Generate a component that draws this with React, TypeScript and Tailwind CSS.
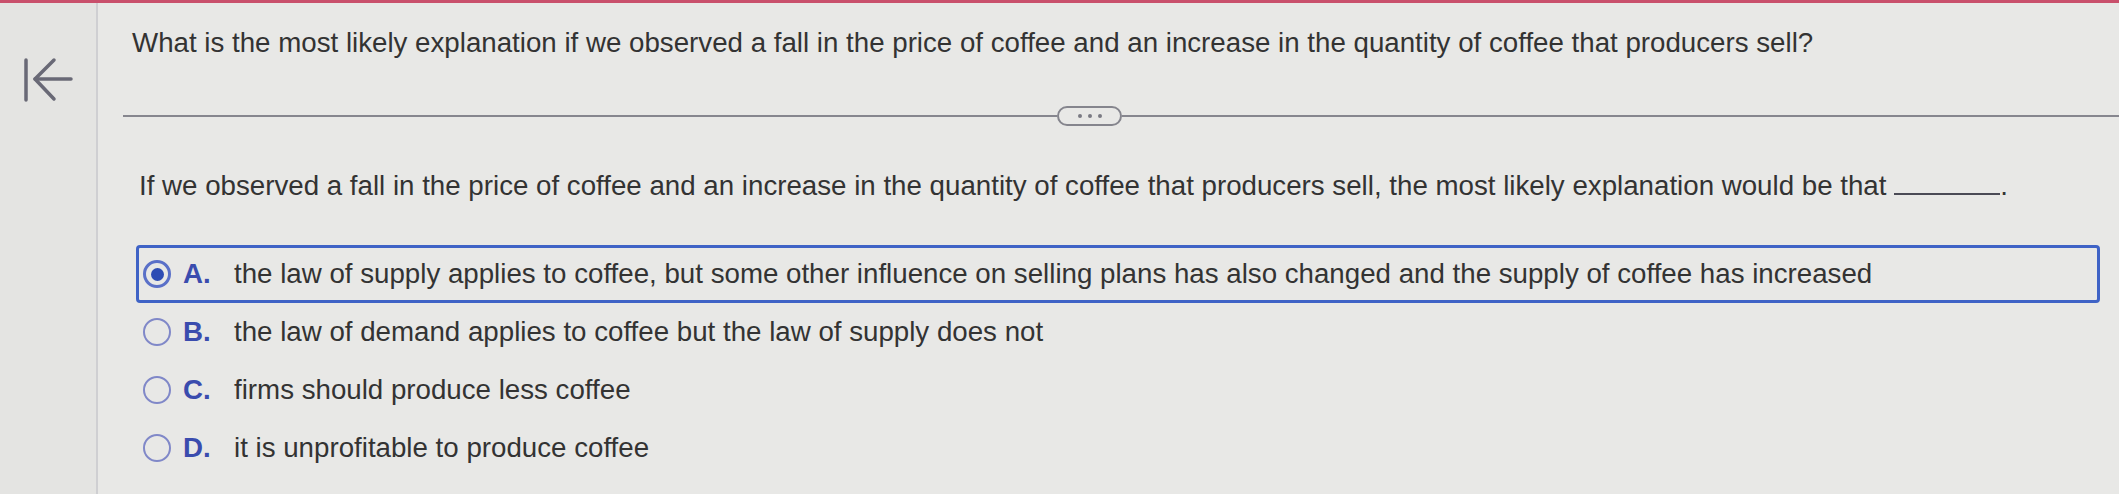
import React from "react";

type Option = { key: string; text: string; selected?: boolean };

const options: Option[] = [
  {
    key: "A.",
    text: "the law of supply applies to coffee, but some other influence on selling plans has also changed and the supply of coffee has increased",
    selected: true,
  },
  { key: "B.", text: "the law of demand applies to coffee but the law of supply does not" },
  { key: "C.", text: "firms should produce less coffee" },
  { key: "D.", text: "it is unprofitable to produce coffee" },
];

const Radio: React.FC<{ checked?: boolean }> = ({ checked }) =>
  checked ? (
    <span className="w-[28px] h-[28px] rounded-full border-[3px] border-[#5a70c8] flex items-center justify-center shrink-0">
      <span className="w-[13px] h-[13px] rounded-full bg-[#2d4cb4]" />
    </span>
  ) : (
    <span className="w-[28px] h-[28px] rounded-full border-2 border-[#8088c8] shrink-0" />
  );

const App: React.FC = () => {
  return (
    <div className="w-[2119px] h-[494px] overflow-hidden bg-[#e8e8e6] flex flex-col font-['Liberation_Sans',Arial,sans-serif] text-[#333333]">
      {/* top accent strip */}
      <div className="h-[3px] bg-[#c9506c] shrink-0" />

      <div className="flex flex-1">
        {/* left rail with back button */}
        <aside className="w-[98px] shrink-0 border-r-2 border-[#cfcfd2] bg-[#e4e4e2] pt-[52px] pl-[19px]">
          <svg width="60" height="50" viewBox="0 0 60 50" fill="none" stroke="#696976" strokeWidth="3.5" strokeLinecap="round" strokeLinejoin="round">
            <path d="M7 5v40" />
            <path d="M52 24H16" />
            <path d="M35 5L16 24l19 20" />
          </svg>
        </aside>

        <main className="flex-1 min-w-0">
          {/* question */}
          <h1 className="mt-[24px] ml-[34px] text-[27.7px] leading-[32px] font-normal">
            What is the most likely explanation if we observed a fall in the price of coffee and an increase in the quantity of coffee that producers sell?
          </h1>

          {/* divider with expand pill */}
          <div className="mt-[47px] ml-[25px] flex items-center h-[20px]">
            <div className="w-[934px] h-[2px] bg-[#86868e]" />
            <button className="w-[65px] h-[20px] rounded-full border-2 border-[#85858d] flex items-center justify-center gap-[6px] shrink-0">
              <span className="w-[4px] h-[4px] rounded-full bg-[#7a7a84]" />
              <span className="w-[4px] h-[4px] rounded-full bg-[#7a7a84]" />
              <span className="w-[4px] h-[4px] rounded-full bg-[#7a7a84]" />
            </button>
            <div className="flex-1 h-[2px] bg-[#86868e]" />
          </div>

          {/* answer prompt */}
          <p className="mt-[44px] ml-[41px] text-[27.7px] leading-[32px]">
            If we observed a fall in the price of coffee and an increase in the quantity of coffee that producers sell, the most likely explanation would be that{" "}
            <span className="inline-block w-[106px] border-b-2 border-[#4a4a55] align-baseline" />.
          </p>

          {/* choices */}
          <div className="mt-[43px] ml-[38px] mr-[19px] flex flex-col">
            {options.map((o) => (
              <label
                key={o.key}
                className={`h-[58px] flex items-center pl-[4px] border-[3px] rounded-[4px] ${
                  o.selected ? "border-[#3f63c6]" : "border-transparent"
                }`}
              >
                <Radio checked={o.selected} />
                <span className="ml-[12px] w-[51px] shrink-0 text-[27.7px] font-bold text-[#3a4cae]">{o.key}</span>
                <span className="text-[27.7px] leading-[32px] whitespace-nowrap">{o.text}</span>
              </label>
            ))}
          </div>
        </main>
      </div>
    </div>
  );
};

export default App;
